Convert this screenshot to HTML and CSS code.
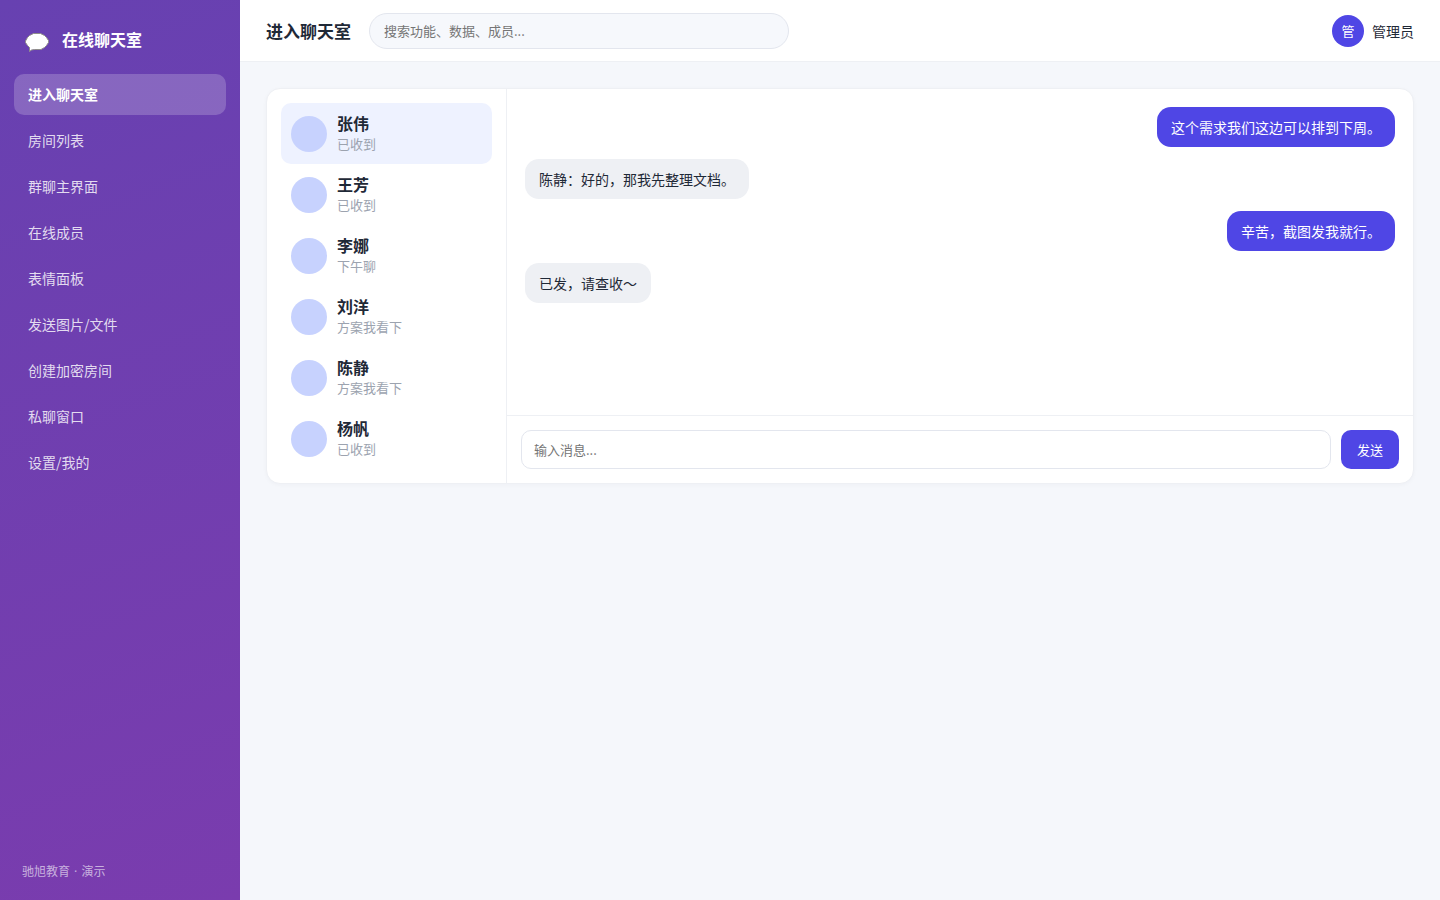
FILE: index.html
```html
<!DOCTYPE html>
<html lang="zh-CN">
<head>
<meta charset="utf-8">
<title>在线聊天室</title>
<link rel="stylesheet" href="styles.css">
</head>
<body>
<div class="app">
  <aside class="sidebar">
    <div class="brand">
      <svg class="brand-icon" width="26" height="26" viewBox="0 0 26 26" aria-hidden="true"><path d="M9.500 7.500H16.500L20.500 9.500L22.500 11.500L24.500 14.500V16.500L22.500 19.500L20.500 21.500L17 23.500H10.500L7.500 24L5.500 25.500V21.500L3.500 19.500L1.500 16.500V15L3.500 11.500L5.500 9.500Z" fill="#fff" stroke="#8f8d8a" stroke-width="1" stroke-linejoin="round"/></svg>
      <span>在线聊天室</span>
    </div>
    <nav class="nav">
      <a class="nav-item active" href="#" aria-current="page">进入聊天室</a>
      <a class="nav-item" href="#">房间列表</a>
      <a class="nav-item" href="#">群聊主界面</a>
      <a class="nav-item" href="#">在线成员</a>
      <a class="nav-item" href="#">表情面板</a>
      <a class="nav-item" href="#">发送图片/文件</a>
      <a class="nav-item" href="#">创建加密房间</a>
      <a class="nav-item" href="#">私聊窗口</a>
      <a class="nav-item" href="#">设置/我的</a>
    </nav>
    <div class="sidebar-foot">驰旭教育 · 演示</div>
  </aside>
  <div class="main">
    <header class="topbar">
      <h1 class="title">进入聊天室</h1>
      <input class="search" type="search" aria-label="搜索" placeholder="搜索功能、数据、成员...">
      <div class="user"><span class="user-avatar">管</span><span>管理员</span></div>
    </header>
    <main class="content">
      <section class="card">
        <ul class="contacts">
          <li><button class="contact selected" type="button"><span class="avatar"></span><span class="info"><span class="name">张伟</span><span class="last">已收到</span></span></button></li>
          <li><button class="contact" type="button"><span class="avatar"></span><span class="info"><span class="name">王芳</span><span class="last">已收到</span></span></button></li>
          <li><button class="contact" type="button"><span class="avatar"></span><span class="info"><span class="name">李娜</span><span class="last">下午聊</span></span></button></li>
          <li><button class="contact" type="button"><span class="avatar"></span><span class="info"><span class="name">刘洋</span><span class="last">方案我看下</span></span></button></li>
          <li><button class="contact" type="button"><span class="avatar"></span><span class="info"><span class="name">陈静</span><span class="last">方案我看下</span></span></button></li>
          <li><button class="contact" type="button"><span class="avatar"></span><span class="info"><span class="name">杨帆</span><span class="last">已收到</span></span></button></li>
        </ul>
        <div class="chat">
          <div class="messages">
            <div class="bubble mine">这个需求我们这边可以排到下周。</div>
            <div class="bubble">陈静：好的，那我先整理文档。</div>
            <div class="bubble mine">辛苦，截图发我就行。</div>
            <div class="bubble">已发，请查收～</div>
          </div>
          <form class="composer">
            <input class="message-input" type="text" aria-label="消息" placeholder="输入消息...">
            <button class="send" type="button">发送</button>
          </form>
        </div>
      </section>
    </main>
  </div>
</div>
</body>
</html>
```
FILE: styles.css
```css
* { box-sizing: border-box; }
body {
  margin: 0;
  font-family: "Noto Sans CJK SC", sans-serif;
  font-size: 14px;
  line-height: 20px;
  color: #1f2937;
  background: #f5f7fb;
}
button, input { font-family: inherit; }
.app { display: flex; min-height: 100vh; }
.sidebar {
  display: flex;
  flex-direction: column;
  flex: 0 0 240px;
  padding: 22px 14px 18px;
  color: #fff;
  background: linear-gradient(160deg, #6741b1, #7a3cae);
}
.brand {
  display: flex;
  align-items: center;
  gap: 12px;
  padding: 0 10px;
  margin-bottom: 18px;
  font-size: 16px;
  font-weight: 700;
  line-height: 34px;
}
.nav { display: flex; flex-direction: column; gap: 5px; }
.nav-item {
  padding: 10px 14px;
  border-radius: 10px;
  line-height: 21px;
  color: rgba(255, 255, 255, 0.82);
  text-decoration: none;
}
.nav-item.active { color: #fff; font-weight: 700; background: rgba(255, 255, 255, 0.2); }
.sidebar-foot {
  margin-top: auto;
  padding: 0 8px;
  font-family: "DejaVu Sans", "Noto Sans CJK SC", sans-serif;
  font-size: 12px;
  color: rgba(255, 255, 255, 0.6);
}
.main { flex: 1; min-width: 0; }
.topbar {
  display: flex;
  align-items: center;
  gap: 18px;
  height: 62px;
  padding: 0 26px;
  background: #fff;
  border-bottom: 1px solid #eef0f4;
}
.title { margin: 0; font-size: 17px; font-weight: 700; white-space: nowrap; }
.search {
  flex: 0 1 420px;
  min-width: 0;
  height: 36px;
  padding: 0 14px;
  border: 1px solid #e3e6ee;
  border-radius: 18px;
  background: #f6f8fc;
  font-size: 13px;
  appearance: none;
}
.user { display: flex; align-items: center; gap: 8px; margin-left: auto; white-space: nowrap; }
.user-avatar {
  width: 32px;
  height: 32px;
  border-radius: 50%;
  background: #4f46e5;
  color: #fff;
  font-size: 13px;
  line-height: 32px;
  text-align: center;
}
.content { padding: 26px; }
.card {
  display: grid;
  grid-template-columns: 240px minmax(0, 1fr);
  border: 1px solid #eef0f4;
  border-radius: 14px;
  background: #fff;
  box-shadow: 0 1px 4px rgba(20, 30, 60, 0.03);
}
.contacts { margin: 0; padding: 14px; list-style: none; border-right: 1px solid #eef0f4; }
.contact {
  display: flex;
  align-items: center;
  gap: 10px;
  width: 100%;
  padding: 10px;
  border: 0;
  border-radius: 10px;
  background: transparent;
  color: inherit;
  text-align: left;
}
.contact.selected { background: #eef2ff; }
.avatar { width: 36px; height: 36px; border-radius: 50%; background: #c7d2fe; }
.info { display: flex; flex-direction: column; }
.name { font-size: 16px; font-weight: 700; line-height: 20px; }
.last { font-size: 13px; line-height: 21px; color: #9ca3af; }
.chat { display: flex; flex-direction: column; }
.messages { display: flex; flex: 1; flex-direction: column; align-items: flex-start; gap: 12px; padding: 18px; }
.bubble { padding: 10px 14px; border-radius: 14px; background: #eef0f4; }
.bubble.mine { align-self: flex-end; background: #4f46e5; color: #fff; }
.composer { display: flex; gap: 10px; padding: 14px; border-top: 1px solid #eef0f4; }
.message-input {
  flex: 1;
  min-width: 0;
  height: 39px;
  padding: 0 12px;
  border: 1px solid #e3e6ee;
  border-radius: 10px;
  background: #fff;
  font-size: 13px;
}
.send {
  padding: 0 16px;
  border: 0;
  border-radius: 10px;
  background: #4f46e5;
  color: #fff;
  font-size: 13px;
}
```
